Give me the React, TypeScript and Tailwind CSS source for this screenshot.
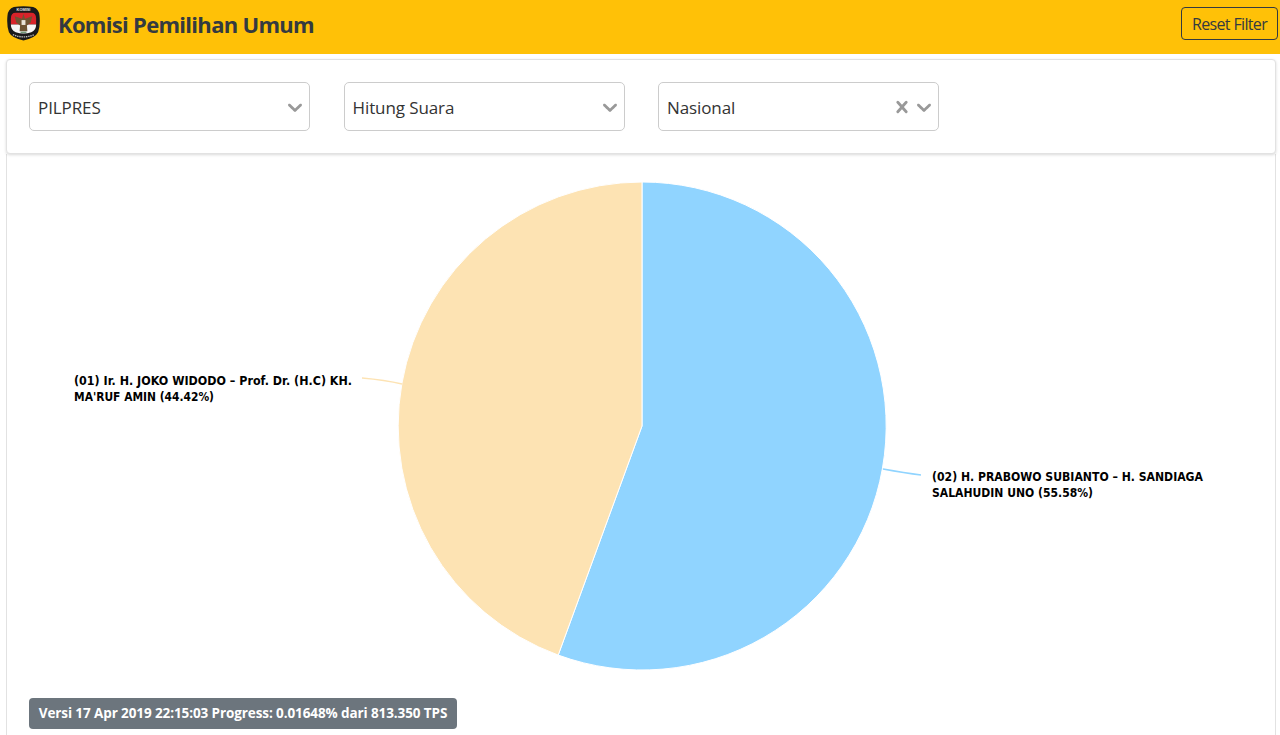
import React from 'react';

const uiFont = { fontFamily: '"Open Sans", "Noto Sans", sans-serif' };

const Chevron = () => (
  <svg width="24" height="24" viewBox="0 0 20 20" className="fill-[#999999] shrink-0">
    <path d="M4.516 7.548c.436-.446 1.043-.481 1.576 0L10 11.295l3.908-3.747c.533-.481 1.141-.446 1.574 0 .436.445.408 1.197 0 1.615-.406.418-4.695 4.502-4.695 4.502a1.095 1.095 0 0 1-1.576 0S4.924 9.581 4.516 9.163c-.409-.418-.436-1.17 0-1.615z" />
  </svg>
);

const Cross = () => (
  <svg width="24" height="24" viewBox="0 0 20 20" className="fill-[#999999] shrink-0">
    <path d="M14.348 14.849a1.2 1.2 0 0 1-1.697 0L10 11.819l-2.651 3.029a1.2 1.2 0 1 1-1.697-1.697l2.758-3.15-2.759-3.152a1.2 1.2 0 1 1 1.697-1.697L10 8.183l2.651-3.031a1.2 1.2 0 1 1 1.697 1.697l-2.758 3.152 2.758 3.15a1.2 1.2 0 0 1 0 1.698z" />
  </svg>
);

const FilterSelect = ({ label, clearable }: { label: string; clearable?: boolean }) => (
  <div className="w-[281px] h-[49px] flex items-center justify-between pl-2 pr-[2px] bg-white border border-[#cccccc] rounded-[5px]">
    <span className="text-[17px] text-[#333333] tracking-[-0.1px] mt-[3px]">{label}</span>
    <div className="flex items-center mt-[2px]">
      {clearable && <Cross />}
      <span className="-ml-[2px]">
        <Chevron />
      </span>
    </div>
  </div>
);

const Logo = () => (
  <svg width="35" height="35" viewBox="0 0 36 36" className="shrink-0">
    <path d="M8 1 Q18 -0.5 28 1 Q34 3 34.5 10 Q35.5 20 33 27 Q30 33 18 35.5 Q6 33 3 27 Q0.5 20 1.5 10 Q2 3 8 1Z" fill="#1a1a1a" />
    <path d="M5 13 Q5 7 10 7 L26 7 Q31 7 31 13 L31 19 L5 19Z" fill="#d8232a" />
    <path d="M5 19 L31 19 Q31 25 26 27 Q18 29.5 10 27 Q5 25 5 19Z" fill="#f6f6f6" />
    <path d="M18 8 L19.5 13 L27 10.5 L25.5 17 L21.5 20 L22 26 L14 26 L14.5 20 L10.5 17 L9 10.5 L16.5 13Z" fill="#6e5433" />
    <rect x="16" y="14.5" width="4" height="5" fill="#e9e4d8" />
    <path d="M15 27 H21" stroke="#3f7a4a" strokeWidth="1" />
    <text x="18" y="5.6" textAnchor="middle" fontSize="4" fontWeight="700" fill="#e8e8e8" fontFamily='"Liberation Sans", sans-serif'>KOMISI</text>
    <path d="M7 29.5 Q18 34 29 29.5" stroke="#bbbbbb" strokeWidth="1.4" strokeDasharray="1.5 0.8" fill="none" />
  </svg>
);

const PieChart = () => (
  <svg width="1268" height="580" viewBox="0 0 1268 580" className="block">
    <g transform="translate(-7 -154)">
      <path d="M642 426 L642 182 A244 244 0 1 1 558.2 655.1 Z" fill="#90d4ff" stroke="#ffffff" strokeWidth="1" />
      <path d="M642 426 L558.2 655.1 A244 244 0 0 1 642 182 Z" fill="#fde3b3" stroke="#ffffff" strokeWidth="1" />
      <path d="M362 378 Q385 380 402 384" fill="none" stroke="#fde3b3" strokeWidth="1.3" />
      <path d="M883 469 Q905 473 921 475" fill="none" stroke="#90d4ff" strokeWidth="1.3" />
      <g fontFamily='"DejaVu Sans", sans-serif' fontSize="11.5" fontWeight="700" fill="#000000">
        <text x="74" y="385" textLength="278" lengthAdjust="spacingAndGlyphs">(01) Ir. H. JOKO WIDODO – Prof. Dr. (H.C) KH.</text>
        <text x="74" y="401" textLength="140" lengthAdjust="spacingAndGlyphs">MA'RUF AMIN (44.42%)</text>
        <text x="932" y="481" textLength="271" lengthAdjust="spacingAndGlyphs">(02) H. PRABOWO SUBIANTO – H. SANDIAGA</text>
        <text x="932" y="497" textLength="161" lengthAdjust="spacingAndGlyphs">SALAHUDIN UNO (55.58%)</text>
      </g>
    </g>
  </svg>
);

export default function App() {
  return (
    <div className="h-[735px] overflow-hidden bg-white" style={uiFont}>
      <header className="h-[54px] bg-[#ffc107] flex items-center justify-between pl-[6px] pr-[2px] pb-[7px]">
        <div className="flex items-center gap-[17px]">
          <Logo />
          <h1 className="text-[22px] font-bold text-[#343a40] tracking-[-0.7px] mt-[2px]">Komisi Pemilihan Umum</h1>
        </div>
        <button className="w-[97px] h-[33px] border border-[#343a40] rounded-[4px] text-[16px] text-[#343a40] tracking-[-0.65px]">
          Reset Filter
        </button>
      </header>

      <main className="pl-[6px] pr-[4px] pt-[5px]">
        <section className="h-[95px] bg-white border border-[#e2e2e2] rounded-[4px] shadow-[0_1px_3px_rgba(0,0,0,0.15)] flex items-center gap-[33.5px] pl-[22px] pb-[1px] relative z-10">
          <FilterSelect label="PILPRES" />
          <FilterSelect label="Hitung Suara" />
          <FilterSelect label="Nasional" clearable />
        </section>

        <section className="h-[600px] border-x border-[#e2e2e2] relative">
          <PieChart />
          <div className="absolute left-[22px] top-[544px] w-[428px] h-[31px] bg-[#6c757d] rounded-[4px] flex items-center justify-center text-[13.5px] font-bold text-white tracking-[-0.1px]">
            Versi 17 Apr 2019 22:15:03 Progress: 0.01648% dari 813.350 TPS
          </div>
        </section>
      </main>
    </div>
  );
}
